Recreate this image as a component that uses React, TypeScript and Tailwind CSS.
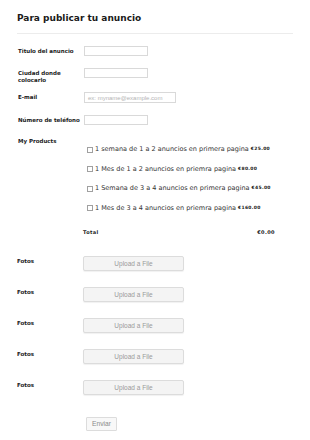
import React from "react";

const sans = { fontFamily: '"DejaVu Sans", Verdana, sans-serif' };

function Label({ children }: { children: React.ReactNode }) {
  return (
    <div className="w-[66px] shrink-0 text-[5.5px] leading-[7px] font-bold text-[#1a1a1a] [font-family:'DejaVu_Sans',Verdana,sans-serif]">
      {children}
    </div>
  );
}

function TextInput({ w = "w-[64px]", h = "h-[10px]", placeholder }: { w?: string; h?: string; placeholder?: string }) {
  return (
    <div className={`${w} ${h} border border-[#d9d9d9] bg-white flex items-center pl-[3px]`}>
      {placeholder && (
        <span className="text-[6px] leading-none text-[#b5b5b5] [font-family:'Liberation_Sans',Arial,sans-serif]">{placeholder}</span>
      )}
    </div>
  );
}

const products = [
  ["1 semana de 1 a 2 anuncios en primera pagina", "€25.00"],
  ["1 Mes de 1 a 2 anuncios en priemra pagina", "€80.00"],
  ["1 Semana de 3 a 4 anuncios en primera pagina", "€45.00"],
  ["1 Mes de 3 a 4 anuncios en priemra pagina", "€160.00"],
];

export default function App() {
  return (
    <div className="w-[310px] h-[440px] bg-white overflow-hidden" style={sans}>
      <div className="pl-[17px] pr-[17px] pt-[12px]">
        <h1 className="h-[12px] text-[9px] leading-[12px] font-bold text-[#1a1a1a] [font-family:'DejaVu_Sans',Verdana,sans-serif]">
          Para publicar tu anuncio
        </h1>
        <div className="mt-[9px] border-b border-[#ececec]" />
      </div>

      <div className="pl-[18px] pt-[12px] flex flex-col">
        {/* Titulo */}
        <div className="flex items-center h-[10px]">
          <Label>Titulo del anuncio</Label>
          <TextInput />
        </div>
        {/* Ciudad */}
        <div className="flex items-start h-[10px] mt-[12px]">
          <div className="pt-[1.5px]">
            <Label>
              Ciudad donde
              <br />
              colocarlo
            </Label>
          </div>
          <TextInput />
        </div>
        {/* Email */}
        <div className="flex items-center h-[11px] mt-[14px]">
          <Label>E-mail</Label>
          <TextInput w="w-[92px]" h="h-[11px]" placeholder="ex: myname@example.com" />
        </div>
        {/* Telefono */}
        <div className="flex items-center h-[10px] mt-[12px]">
          <Label>Número de teléfono</Label>
          <TextInput />
        </div>

        {/* Products */}
        <div className="flex items-start mt-[13px]">
          <Label>My Products</Label>
          <div className="flex flex-col gap-[12px] pt-[7.75px] pl-[3px]">
            {products.map(([t, p]) => (
              <div key={t} className="h-[7.5px] flex items-center">
                <span className="w-[6px] h-[6px] border border-[#a0a0a0] bg-white shrink-0 mr-[2px]" />
                <span className="text-[6.5px] leading-none text-[#333] whitespace-nowrap [font-family:'DejaVu_Sans',Verdana,sans-serif]">
                  {t}
                </span>
                <span className="ml-[2px] text-[4.5px] leading-none font-bold tracking-[0.3px] text-[#222] whitespace-nowrap [font-family:'DejaVu_Sans',Verdana,sans-serif]">
                  {p}
                </span>
              </div>
            ))}
          </div>
        </div>

        {/* Total */}
        <div className="flex items-center h-[7px] mt-[17px]">
          <div className="w-[65px] shrink-0" />
          <div className="w-[192px] flex justify-between text-[5px] leading-none font-bold tracking-[0.4px] text-[#1a1a1a]">
            <span>Total</span>
            <span>€0.00</span>
          </div>
        </div>

        {/* Fotos */}
        <div className="flex flex-col gap-[16px] mt-[20.5px]">
          {[0, 1, 2, 3, 4].map((i) => (
            <div key={i} className="flex items-start h-[15px]">
              <div className="pt-[2px] -ml-px">
                <div className="w-[66px] shrink-0 text-[5.5px] leading-[7px] font-bold text-[#1a1a1a]">Fotos</div>
              </div>
              <div className="w-[101px] h-[15px] rounded-[2px] border border-[#dcdcdc] bg-[#f4f4f4] shadow-[0_1px_1px_rgba(0,0,0,0.06)] flex items-center justify-center">
                <span className="text-[6.5px] leading-none text-[#9a9a9a] [font-family:'Liberation_Sans',Arial,sans-serif]">
                  Upload a File
                </span>
              </div>
            </div>
          ))}
        </div>

        {/* Enviar */}
        <div className="flex mt-[22px]">
          <div className="w-[68px] shrink-0" />
          <div className="w-[31px] h-[14px] border border-[#dcdcdc] bg-[#f8f8f8] rounded-[1px] flex items-center justify-center">
            <span className="text-[6.7px] leading-none text-[#8a8a8a] [font-family:'Liberation_Sans',Arial,sans-serif]">Enviar</span>
          </div>
        </div>
      </div>
    </div>
  );
}
